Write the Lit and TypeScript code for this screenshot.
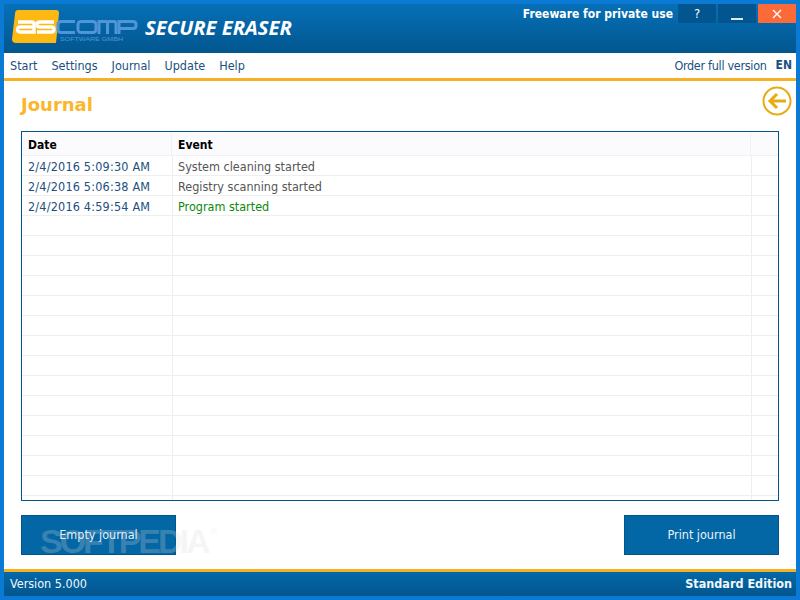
import { LitElement, html, css } from "lit";
import { customElement } from "lit/decorators.js";

const rows: [string, string, string][] = [
  ["2/4/2016 5:09:30 AM", "System cleaning started", "ev"],
  ["2/4/2016 5:06:38 AM", "Registry scanning started", "ev"],
  ["2/4/2016 4:59:54 AM", "Program started", "ev ok"],
  ...Array.from({ length: 15 }, () => ["", "", "ev"] as [string, string, string]),
];

@customElement("app-root")
export class AppRoot extends LitElement {
  static styles = css`
    :host {
      display: block;
      width: 800px;
      height: 600px;
      font-family: "DejaVu Sans Condensed", "DejaVu Sans", sans-serif;
      font-stretch: condensed;
      font-size: 12.5px;
      color: #1c5080;
      overflow: hidden;
    }
    * { box-sizing: border-box; }
    .win {
      position: relative;
      width: 800px;
      height: 600px;
      border: 4px solid #0a7ad4;
      display: flex;
      flex-direction: column;
      background: #fff;
    }
    .head {
      height: 49px;
      flex: none;
      background: linear-gradient(#0670b8, #02568e);
      display: flex;
      align-items: flex-start;
      justify-content: space-between;
    }
    .brand { display: flex; align-items: flex-start; padding: 6px 0 0 8px; }
    .logo { display: block; }
    .product {
      font-family: "Open Sans", sans-serif;
      font-stretch: normal;
      font-style: italic;
      font-weight: 700;
      font-size: 20.3px;
      line-height: 24px;
      margin-top: 5px;
      color: #fff;
      margin-left: 7px;
      white-space: nowrap;
    }
    .ctl { display: flex; align-items: center; }
    .free {
      color: #fff;
      font-weight: 700;
      font-size: 12px;
      margin-right: 5px;
    }
    .wbtn {
      width: 38px;
      height: 19px;
      margin-left: 2px;
      background: #02558f;
      color: #fff;
      display: flex;
      align-items: center;
      justify-content: center;
      font-size: 13px;
    }
    .wbtn.help { margin-left: 0; }
    .wbtn.close { background: #fd6a39; }
    .menu {
      height: 25px;
      flex: none;
      display: flex;
      align-items: center;
      justify-content: space-between;
      padding: 0 4px 0 6px;
    }
    .items, .rt { display: flex; gap: 14px; }
    .rt { gap: 9px; }
    .rt span { letter-spacing: -0.3px; }
    .rt b { font-size: 12px; line-height: 15px; }
    .line { height: 3px; flex: none; background: #f7b021; }
    .main {
      flex: 1;
      min-height: 0;
      padding: 11px 17px 14px 17px;
      display: flex;
      flex-direction: column;
      position: relative;
    }
    .title-row { height: 39px; flex: none; display: flex; justify-content: space-between; align-items: flex-start; }
    h1 {
      margin: 0;
      font-family: "DejaVu Sans", sans-serif;
      font-stretch: normal;
      font-weight: 700;
      font-size: 18px;
      line-height: 25px;
      color: #fbb62c;
    }
    .back { margin-right: -13px; transform: translateY(-6px); display: block; }
    .table {
      flex: none;
      height: 370px;
      border: 1px solid #02568e;
      overflow: hidden;
    }
    .row {
      display: grid;
      grid-template-columns: 151px 579px 1fr;
      height: 20px;
      border-bottom: 1px solid #eeeeee;
    }
    .row > div {
      padding: 2px 0 0 5px;
      line-height: 18px;
      border-right: 1px solid #eeeeee;
      white-space: nowrap;
    }
    .row > div:last-child { border-right: 0; }
    .row.hd {
      grid-template-columns: 150px 579px 1fr;
      height: 24px;
      background: #fbfbfd;
      border-bottom: 1px solid #eef1f9;
      color: #000;
      font-weight: 700;
      font-size: 12px;
    }
    .row.hd > div { padding: 2px 0 0 6px; line-height: 22px; border-right-color: #eef1f9; }
    .row > .date { color: #1c5080; padding-left: 6px; letter-spacing: 0.2px; }
    .ev { color: #555; }
    .ok { color: #0a8a0a; }
    .btns { flex: none; display: flex; justify-content: space-between; margin-top: 14px; }
    .btn {
      width: 155px;
      height: 40px;
      padding-bottom: 2px;
      background: #0366a5;
      border: 1px solid #02568e;
      color: #e9f3fa;
      display: flex;
      align-items: center;
      justify-content: center;
    }
    .foot {
      height: 24px;
      flex: none;
      background: linear-gradient(#0468a8, #02568e);
      color: #f2f7fb;
      display: flex;
      align-items: center;
      justify-content: space-between;
      padding: 0 4px 2px 6px;
    }
    .foot b { font-size: 12.5px; }
    .mark {
      position: absolute;
      left: 36px;
      top: 519px;
      font-family: "Liberation Sans", sans-serif;
      font-stretch: normal;
      font-weight: 700;
      font-size: 34px;
      letter-spacing: -3px;
      line-height: 36px;
      color: rgba(215, 215, 215, 0.26);
      white-space: nowrap;
    }
    .mark sup { font-size: 9px; letter-spacing: 0; margin-left: 3px; vertical-align: 18px; font-weight: 400; line-height: 0; }
    .sub {
      font-family: "Liberation Sans", sans-serif;
      font-stretch: normal;
      font-size: 6px;
      fill: #4f95d8;
    }
  `;

  render() {
    return html`
      <div class="win">
        <div class="head">
          <div class="brand">
            <svg class="logo" width="126" height="33" viewBox="0 0 126 33">
              <path d="M6 0h38q3 0 3 3L44 33H4q-4 0-4-4L3 4q0-4 3-4z" fill="#fdb813"/>
              <g fill="none" stroke="#fff" stroke-width="3.4">
                <path d="M6 12H20q2 0 2 2V22H8q-2.5 0-2.5-2.5T8 17H22"/>
                <path d="M42 12H28q-3 0-3 2.5T28 17H39q3 0 3 2.5T39 22H25"/>
              </g>
              <g fill="none" stroke="#4f95d8" stroke-width="3">
                <path d="M63 11.5H49q-3 0-3 3v5q0 3 3 3H63"/>
                <rect x="66" y="11.5" width="18" height="11" rx="3"/>
                <path d="M87 24V11.5H94q1.5 0 1.5 2V24M95.5 13.5q0-2 1.5-2H102q2 0 2 2V24"/>
                <path d="M107 24V11.5H121q3 0 3 3v1q0 3-3 3H107"/>
              </g>
              <text class="sub" x="48" y="31" textLength="63" lengthAdjust="spacingAndGlyphs">SOFTWARE GMBH</text>
            </svg>
            <span class="product">SECURE ERASER</span>
          </div>
          <div class="ctl">
            <span class="free">Freeware for private use</span>
            <div class="wbtn help">?</div>
            <div class="wbtn">
              <svg width="14" height="14" viewBox="0 0 14 14"><rect x="1" y="11" width="12" height="2" fill="#dfe9f2"/></svg>
            </div>
            <div class="wbtn close">
              <svg width="10" height="10" viewBox="0 0 10 10"><path d="M1 1l8 8M9 1l-8 8" stroke="#fff" stroke-width="1.4"/></svg>
            </div>
          </div>
        </div>
        <div class="menu">
          <div class="items"><span>Start</span><span>Settings</span><span>Journal</span><span>Update</span><span>Help</span></div>
          <div class="rt"><span>Order full version</span><b>EN</b></div>
        </div>
        <div class="line"></div>
        <div class="main">
          <div class="title-row">
            <h1>Journal</h1>
            <svg class="back" width="30" height="30" viewBox="0 0 30 30">
              <circle cx="15" cy="15" r="13.5" fill="none" stroke="#e6ac12" stroke-width="2"/>
              <path d="M15 8l-7 7 7 7M8 15h16" fill="none" stroke="#e6ac12" stroke-width="3"/>
            </svg>
          </div>
          <div class="table">
            <div class="row hd"><div>Date</div><div>Event</div><div></div></div>
            ${rows.map(
              ([d, e, c]) => html`<div class="row"><div class="date">${d}</div><div class=${c}>${e}</div><div></div></div>`
            )}
          </div>
          <div class="btns">
            <div class="btn">Empty journal</div>
            <div class="btn">Print journal</div>
          </div>
        </div>
        <div class="line"></div>
        <div class="foot"><span>Version 5.000</span><b>Standard Edition</b></div>
        <div class="mark">SOFTPEDIA<sup>®</sup></div>
      </div>
    `;
  }
}
